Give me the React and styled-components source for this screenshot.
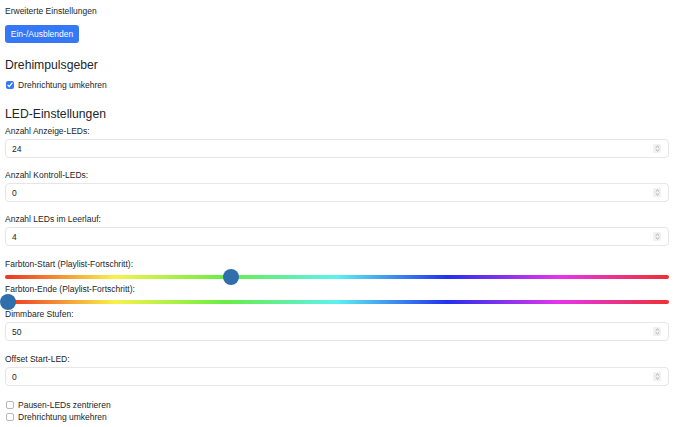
import React from 'react'
import styled, {createGlobalStyle} from 'styled-components'

const Global = createGlobalStyle`
  html, body {
    margin: 0;
    padding: 0;
    background: #fff;
  }
  body {
    font-family: "Liberation Sans", Arial, Helvetica, sans-serif;
    color: #212529;
  }
`

const Page = styled.div`
  padding: 5px 20px 10px 5px;
  display: flex;
  flex-direction: column;
`

const Caption = styled.div`
  font-size: 8.5px;
  line-height: 12px;
`

const ToggleButton = styled.button`
  align-self: flex-start;
  margin-top: 8px;
  height: 18px;
  width: 74px;
  padding: 0;
  border: none;
  border-radius: 3px;
  background: #3478f6;
  color: #fff;
  font-family: inherit;
  font-size: 8.5px;
  line-height: 18px;
  cursor: pointer;
`

const Heading = styled.h3`
  margin: ${p => p.$top}px 0 0;
  font-size: 12.2px;
  font-weight: 400;
  line-height: 16px;
  color: #212529;
`

const CheckRow = styled.label`
  display: flex;
  align-items: center;
  gap: 4px;
  margin-top: ${p => p.$top || 0}px;
  font-size: 8.5px;
  line-height: 12px;
`

const Check = styled.input`
  margin: 0 0 0 1px;
  width: 8px;
  height: 8px;
  accent-color: #3478f6;

  &:not(:checked) {
    appearance: none;
    box-sizing: border-box;
    border: 1px solid #b9b9b9;
    border-radius: 2px;
    background: #fff;
  }
`

const Label = styled.div`
  margin-top: ${p => p.$top}px;
  font-size: 8.5px;
  line-height: 12px;
`

const Field = styled.div`
  margin-top: 2px;
  height: 19px;
  box-sizing: border-box;
  border: 1px solid #e6e6e6;
  border-radius: 4px;
  display: flex;
  align-items: center;
  justify-content: space-between;
  padding: 0 7px 0 6px;
  font-size: 8.5px;
`

const Spinner = styled.span`
  display: flex;
  align-items: center;
  justify-content: center;
  width: 8px;
  height: 9px;
  background: #f1f1f1;
  border-radius: 1px;
`

const Track = styled.div`
  position: relative;
  margin-top: 5px;
  height: 4px;
  border-radius: 2px;
  background: linear-gradient(to right,
    #ee3322 0%,
    #f7f24a 16.6%,
    #66ee44 33.3%,
    #5cf1f1 50%,
    #2230f0 66.6%,
    #e634ee 83.3%,
    #ee3030 100%);
`

const Thumb = styled.span`
  position: absolute;
  top: -6px;
  width: 16px;
  height: 16px;
  border-radius: 50%;
  background: #2f6fab;
`

function NumberField({label, value, top}) {
  return (
    <>
      <Label $top={top}>{label}</Label>
      <Field>
        <span>{value}</span>
        <Spinner>
          <svg width="5" height="7" viewBox="0 0 5 7">
            <path d="M0.8 2.6 L2.5 1 L4.2 2.6 M0.8 4.4 L2.5 6 L4.2 4.4" fill="none" stroke="#999" strokeWidth="0.8"/>
          </svg>
        </Spinner>
      </Field>
    </>
  )
}

function HueSlider({label, value, top}) {
  return (
    <>
      <Label $top={top}>{label}</Label>
      <Track>
        <Thumb style={{left: `calc(${value} * 100% - 5px)`}}/>
      </Track>
    </>
  )
}

export default function App() {
  return (
    <>
      <Global/>
      <Page>
        <Caption>Erweiterte Einstellungen</Caption>
        <ToggleButton>Ein-/Ausblenden</ToggleButton>

        <Heading $top={14}>Drehimpulsgeber</Heading>
        <CheckRow $top={6}>
          <Check type="checkbox" defaultChecked/>
          Drehrichtung umkehren
        </CheckRow>

        <Heading $top={15}>LED-Einstellungen</Heading>
        <NumberField label="Anzahl Anzeige-LEDs:" value="24" top={3}/>
        <NumberField label="Anzahl Kontroll-LEDs:" value="0" top={11}/>
        <NumberField label="Anzahl LEDs im Leerlauf:" value="4" top={11}/>

        <HueSlider label="Farbton-Start (Playlist-Fortschritt):" value={0.3358} top={12}/>
        <HueSlider label="Farbton-Ende (Playlist-Fortschritt):" value={0} top={4}/>

        <NumberField label="Dimmbare Stufen:" value="50" top={4}/>
        <NumberField label="Offset Start-LED:" value="0" top={12}/>

        <CheckRow $top={13}>
          <Check type="checkbox"/>
          Pausen-LEDs zentrieren
        </CheckRow>
        <CheckRow>
          <Check type="checkbox"/>
          Drehrichtung umkehren
        </CheckRow>
      </Page>
    </>
  )
}
